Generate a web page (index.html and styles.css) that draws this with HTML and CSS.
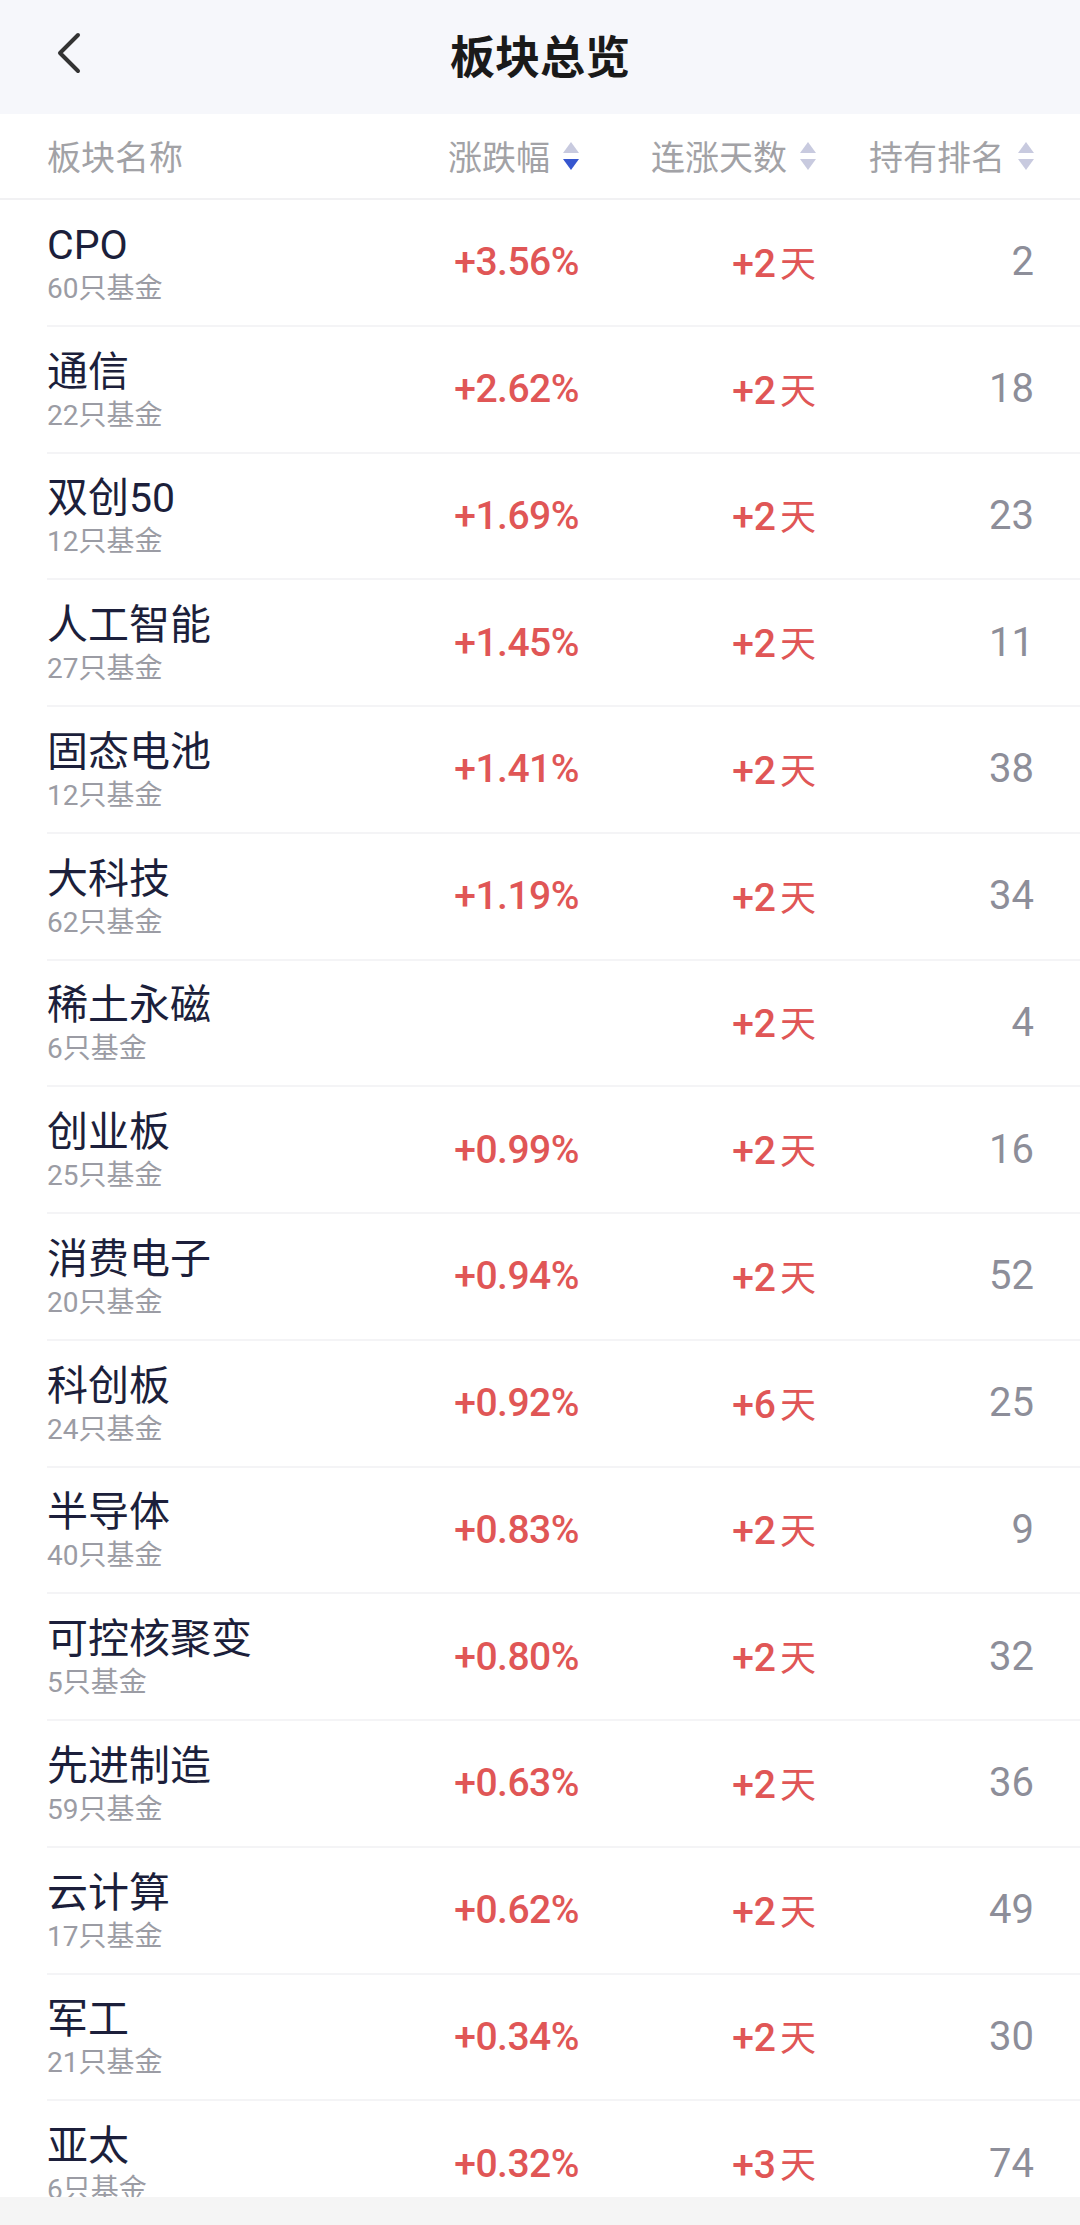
FILE: index.html
```html
<!DOCTYPE html>
<html lang="zh-CN">
<head>
<meta charset="utf-8">
<title>板块总览</title>
<link rel="stylesheet" href="styles.css">
</head>
<body>
<div class="screen">
  <header class="topbar">
    <button class="back" aria-label="返回">
      <svg width="30" height="44" viewBox="0 0 30 44"><path d="M24 4 L6 22 L24 40" fill="none" stroke="#333" stroke-width="4" stroke-linecap="round" stroke-linejoin="round"/></svg>
    </button>
    <h1 class="title">板块总览</h1>
  </header>

  <div class="thead">
    <div class="th th-name">板块名称</div>
    <div class="th th-num">涨跌幅<span class="sort"><i class="up"></i><i class="down active"></i></span></div>
    <div class="th th-num">连涨天数<span class="sort"><i class="up"></i><i class="down"></i></span></div>
    <div class="th th-num">持有排名<span class="sort"><i class="up"></i><i class="down"></i></span></div>
  </div>

  <div class="list">
    <div class="row"><div class="name"><div class="n">CPO</div><div class="sub">60只基金</div></div><div class="val">+3.56%</div><div class="days">+2<span class="d">天</span></div><div class="rank">2</div></div>
    <div class="row"><div class="name"><div class="n">通信</div><div class="sub">22只基金</div></div><div class="val">+2.62%</div><div class="days">+2<span class="d">天</span></div><div class="rank">18</div></div>
    <div class="row"><div class="name"><div class="n">双创50</div><div class="sub">12只基金</div></div><div class="val">+1.69%</div><div class="days">+2<span class="d">天</span></div><div class="rank">23</div></div>
    <div class="row"><div class="name"><div class="n">人工智能</div><div class="sub">27只基金</div></div><div class="val">+1.45%</div><div class="days">+2<span class="d">天</span></div><div class="rank">11</div></div>
    <div class="row"><div class="name"><div class="n">固态电池</div><div class="sub">12只基金</div></div><div class="val">+1.41%</div><div class="days">+2<span class="d">天</span></div><div class="rank">38</div></div>
    <div class="row"><div class="name"><div class="n">大科技</div><div class="sub">62只基金</div></div><div class="val">+1.19%</div><div class="days">+2<span class="d">天</span></div><div class="rank">34</div></div>
    <div class="row"><div class="name"><div class="n">稀土永磁</div><div class="sub">6只基金</div></div><div class="val"></div><div class="days">+2<span class="d">天</span></div><div class="rank">4</div></div>
    <div class="row"><div class="name"><div class="n">创业板</div><div class="sub">25只基金</div></div><div class="val">+0.99%</div><div class="days">+2<span class="d">天</span></div><div class="rank">16</div></div>
    <div class="row"><div class="name"><div class="n">消费电子</div><div class="sub">20只基金</div></div><div class="val">+0.94%</div><div class="days">+2<span class="d">天</span></div><div class="rank">52</div></div>
    <div class="row"><div class="name"><div class="n">科创板</div><div class="sub">24只基金</div></div><div class="val">+0.92%</div><div class="days">+6<span class="d">天</span></div><div class="rank">25</div></div>
    <div class="row"><div class="name"><div class="n">半导体</div><div class="sub">40只基金</div></div><div class="val">+0.83%</div><div class="days">+2<span class="d">天</span></div><div class="rank">9</div></div>
    <div class="row"><div class="name"><div class="n">可控核聚变</div><div class="sub">5只基金</div></div><div class="val">+0.80%</div><div class="days">+2<span class="d">天</span></div><div class="rank">32</div></div>
    <div class="row"><div class="name"><div class="n">先进制造</div><div class="sub">59只基金</div></div><div class="val">+0.63%</div><div class="days">+2<span class="d">天</span></div><div class="rank">36</div></div>
    <div class="row"><div class="name"><div class="n">云计算</div><div class="sub">17只基金</div></div><div class="val">+0.62%</div><div class="days">+2<span class="d">天</span></div><div class="rank">49</div></div>
    <div class="row"><div class="name"><div class="n">军工</div><div class="sub">21只基金</div></div><div class="val">+0.34%</div><div class="days">+2<span class="d">天</span></div><div class="rank">30</div></div>
    <div class="row"><div class="name"><div class="n">亚太</div><div class="sub">6只基金</div></div><div class="val">+0.32%</div><div class="days">+3<span class="d">天</span></div><div class="rank">74</div></div>
  </div>

  <div class="bottombar"></div>
</div>
</body>
</html>
```

FILE: styles.css
```css
* { box-sizing: border-box; margin: 0; padding: 0; }
html, body { width: 1080px; height: 2225px; overflow: hidden; background: #fff; }
body {
  font-family: Roboto, "Noto Sans CJK SC", sans-serif;
  color: #1c1f3b;
}
.screen {
  display: flex;
  flex-direction: column;
  height: 2225px;
}
.topbar {
  height: 114px;
  flex: none;
  background: #f6f7fb;
  display: flex;
  align-items: center;
  justify-content: center;
  position: relative;
}
.back {
  position: absolute;
  left: 54px;
  top: 31px;
  width: 30px;
  height: 44px;
  border: 0;
  background: none;
  display: flex;
}
.title {
  font-family: "Noto Sans CJK SC", sans-serif;
  font-size: 45px;
  font-weight: 700;
  color: #1a1a1a;
  line-height: 1;
  margin-top: -6px;
}
.thead {
  flex: none;
  height: 86px;
  display: grid;
  grid-template-columns: 1fr 160px 237px 218px;
  align-items: center;
  padding: 0 46px 0 47px;
  border-bottom: 2px solid #f1f1f3;
}
.th {
  font-family: "Noto Sans CJK SC", sans-serif;
  font-size: 34px;
  color: #a2a2a6;
  line-height: 40px;
  display: flex;
  align-items: center;
}
.th-num { justify-content: flex-end; }
.sort {
  display: flex;
  flex-direction: column;
  gap: 6px;
  margin-left: 13px;
  width: 16px;
  align-items: center;
}
.sort i {
  display: block;
  width: 0;
  height: 0;
  border-left: 8px solid transparent;
  border-right: 8px solid transparent;
}
.sort .up { border-bottom: 11px solid #c8cadf; }
.sort .down { border-top: 11px solid #c8cadf; }
.sort .down.active { border-top-color: #3656cf; }

.list {
  flex: 1;
  overflow: hidden;
}
.row {
  height: 126.75px;
  margin-left: 47px;
  padding-right: 46px;
  border-bottom: 2px solid #f4f4f6;
  display: grid;
  grid-template-columns: 1fr 160px 237px 218px;
  align-items: center;
}
.name { padding-top: 2px; }
.n {
  font-size: 41px;
  line-height: 48px;
  color: #1c1f3b;
}
.sub {
  font-size: 28px;
  line-height: 34px;
  margin-top: 3px;
  color: #9b9ca4;
}
.val, .days, .rank {
  text-align: right;
  font-size: 39px;
  line-height: 46px;
}
.val { color: #e05656; font-weight: 500; letter-spacing: -0.5px; }
.days { color: #e05656; font-weight: 500; }
.days .d { font-family: "Noto Sans CJK SC", sans-serif; font-size: 36px; font-weight: 400; margin-left: 4px; }
.rank { color: #8d8e99; font-size: 40px; }
.bottombar {
  flex: none;
  height: 28px;
  background: #f5f5f5;
}
```
